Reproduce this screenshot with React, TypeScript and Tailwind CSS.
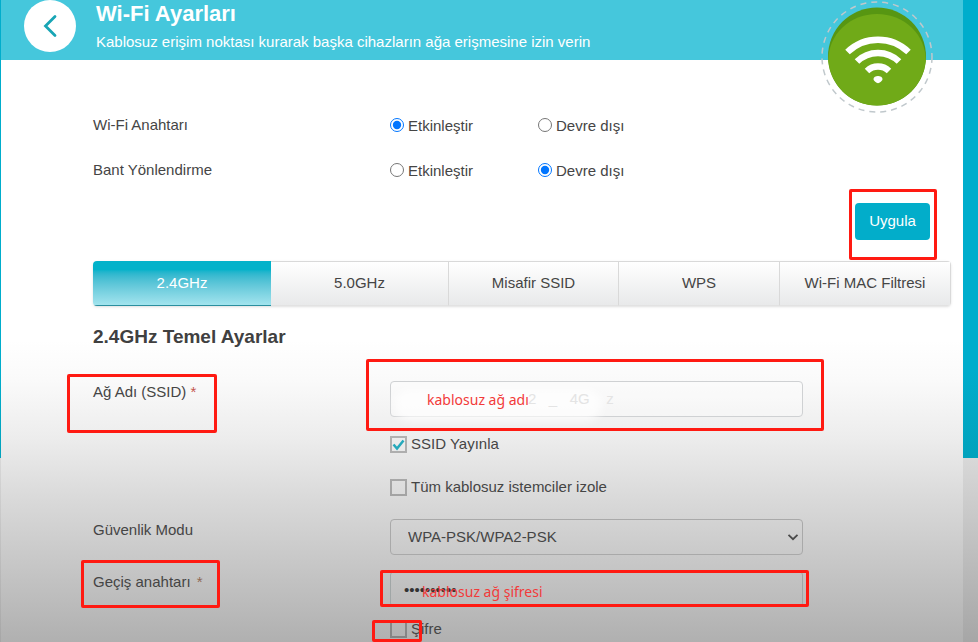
import { useState } from "react";
import type { ReactNode } from "react";

const tabs = ["2.4GHz", "5.0GHz", "Misafir SSID", "WPS", "Wi-Fi MAC Filtresi"];

function Mark({ className }: { className: string }) {
  return <span aria-hidden="true" className={`pointer-events-none absolute rounded-xs border-3 border-[#ff1a12] ${className}`} />;
}

function Note({ className, children }: { className: string; children: ReactNode }) {
  return (
    <span
      className={`pointer-events-none absolute text-[14px] leading-5 whitespace-nowrap text-[#f23a3a] font-['Noto_Sans',sans-serif] ${className}`}
    >
      {children}
    </span>
  );
}

function WifiBadge() {
  return (
    <svg viewBox="0 0 114 114" className="absolute top-0 right-[29px] size-[114px]" aria-hidden="true">
      <path d="M3 60a54 54 0 0 0 108 0z" fill="#fff" />
      <circle cx="57" cy="57" r="55" fill="none" stroke="#c0c8cc" strokeWidth="1.5" strokeDasharray="6 5" />
      <circle cx="57" cy="56.5" r="49" fill="#579612" />
      <path d="M8.2 61C8.2 34 30 14 57 14S105.800 34 105.800 61A49 49 0 0 1 8.200 61z" fill="#70aa18" />
      <g fill="none" stroke="#fff" strokeWidth="6.5">
        <path d="M27.500 52A44 44 0 0 1 88.500 52" />
        <path d="M37 61.500A30 30 0 0 1 79 61.500" />
        <path d="M47 71A16 16 0 0 1 69 71" />
      </g>
      <path d="M53.500 79c0-4 9-4 9 0 0 1.800-3 4-4.500 4.200C56.500 83 53.500 80.800 53.500 79z" fill="#fff" />
    </svg>
  );
}

function RadioRow({ name, label, initial }: { name: string; label: string; initial: "on" | "off" }) {
  const [value, setValue] = useState(initial);
  return (
    <>
      <span id={`${name}-label`} className="leading-[23px]">
        {label}
      </span>
      <div role="radiogroup" aria-labelledby={`${name}-label`} className="grid grid-cols-[148fr_265fr] leading-[26px]">
        <label className="flex items-start gap-1">
          <input type="radio" name={name} checked={value === "on"} onChange={() => setValue("on")} className="mt-[5px] size-[14px]" />
          Etkinleştir
        </label>
        <label className="flex items-start gap-1">
          <input type="radio" name={name} checked={value === "off"} onChange={() => setValue("off")} className="mt-[5px] size-[14px]" />
          Devre dışı
        </label>
      </div>
      <span />
    </>
  );
}

function CheckRow({ label, checked = false }: { label: string; checked?: boolean }) {
  return (
    <label className="flex items-center gap-1 leading-[18px]">
      <span className="relative size-[17px]">
        <input
          type="checkbox"
          defaultChecked={checked}
          className="peer block size-[17px] appearance-none border-2 border-black/25 bg-transparent"
        />
        <svg
          viewBox="0 0 17 17"
          className="pointer-events-none absolute inset-0 hidden peer-checked:block"
          fill="none"
          stroke="#25a9bb"
          strokeWidth="2.5"
        >
          <path d="M3.500 8.500l3.500 4 6.500-8" />
        </svg>
      </span>
      {label}
    </label>
  );
}

export default function App() {
  const [tab, setTab] = useState(tabs[0]);
  const row = "grid grid-cols-[297fr_413fr_148fr] items-start";

  return (
    <div className="min-h-screen bg-[linear-gradient(#00adcc_0,#00adcc_370px,#02a2bc_458px,#d8d8d8_458px,#a6a6a6_642px)] pr-[15px] pl-px font-['Liberation_Sans',Arial,sans-serif] text-[15px] text-[#454545]">
      <div className="relative min-h-screen bg-[linear-gradient(#fff_0,#fff_340px,#fafafa_380px,#ececec_440px,#d9d9d9_500px,#c5c5c5_570px,#b0b0b0_642px)]">
        <header className="flex h-[60px] items-start gap-5 bg-[#45c7dc] pl-[23px] text-white">
          <button type="button" aria-label="Geri" className="flex size-[52px] items-center justify-center rounded-full bg-white">
            <svg viewBox="0 0 52 52" className="size-[52px]" fill="none" stroke="#18a5b5" strokeWidth="2.8" strokeLinecap="round">
              <path d="M31 16.500L21.500 26L31 35.500" />
            </svg>
          </button>
          <div className="leading-7">
            <h1 className="text-[22px] font-bold">Wi-Fi Ayarları</h1>
            <p className="text-[15px]">Kablosuz erişim noktası kurarak başka cihazların ağa erişmesine izin verin</p>
          </div>
          <WifiBadge />
        </header>

        <main className="pt-[53px] pr-3 pl-[92px]">
          <div className={`${row} gap-y-[19px]`}>
            <RadioRow name="wifi" label="Wi-Fi Anahtarı" initial="on" />
            <RadioRow name="band" label="Bant Yönlendirme" initial="off" />
          </div>

          <div className="mt-[19px] flex justify-end pr-[21px]">
            <div className="relative">
              <button type="button" className="block h-[37px] w-[75px] rounded bg-[#02adca] text-white">
                Uygula
              </button>
              <Mark className="-top-[14px] -right-[7px] -bottom-5 -left-[6px]" />
            </div>
          </div>

          <nav className="mt-[21px] grid h-[45px] grid-cols-[178fr_178fr_170fr_161fr_171fr] overflow-hidden rounded shadow-sm">
            {tabs.map((t) => (
              <button
                key={t}
                type="button"
                onClick={() => setTab(t)}
                className={
                  t === tab
                    ? "border-b border-[#2b8f9f] bg-linear-to-b from-[#02b2ca] from-20% to-[#a2e4ee] text-white"
                    : "border-y border-r border-t-[#d9d9d9] border-r-[#d9d9d9] border-b-[#e2e2e2] bg-linear-to-b from-white to-[#e8e9ea]"
                }
              >
                {t}
              </button>
            ))}
          </nav>

          <h2 className="mt-[17px] text-[19px] leading-7 font-bold text-[#404040]">2.4GHz Temel Ayarlar</h2>

          <div className={`${row} mt-[30px]`}>
            <div className="relative leading-[22px]">
              <label htmlFor="ssid">
                Ağ Adı (SSID) <span className="text-[#c4554d]">*</span>
              </label>
              <Mark className="-top-[7px] -left-[26px] h-[59px] w-[150px]" />
            </div>
            <div className="relative">
              <input id="ssid" type="text" className="block h-9 w-full rounded border border-[#cfd1d3] bg-white/30 px-[14px]" />
              <span aria-hidden="true" className="pointer-events-none absolute top-2 left-1 h-8 w-52 rounded-full bg-white/70 blur-xs" />
              <span aria-hidden="true" className="pointer-events-none absolute top-2 left-[138px] leading-5 whitespace-pre text-[#e4e4e4]">
                {"2   _   4G    z"}
              </span>
              <Note className="top-[9px] left-[37px]">kablosuz ağ adı</Note>
              <Mark className="-top-[22px] -right-[21px] -bottom-[14px] -left-6" />
            </div>
          </div>

          <div className={`${row} mt-[18px]`}>
            <div className="col-start-2 flex flex-col gap-[25px]">
              <CheckRow label="SSID Yayınla" checked />
              <CheckRow label="Tüm kablosuz istemciler izole" />
            </div>
          </div>

          <div className={`${row} mt-[23px]`}>
            <label htmlFor="security" className="leading-[22px]">
              Güvenlik Modu
            </label>
            <div className="relative">
              <select id="security" className="block h-9 w-full appearance-none rounded border border-[#a9a9a9] bg-transparent px-[17px]">
                <option>WPA-PSK/WPA2-PSK</option>
              </select>
              <svg
                viewBox="0 0 12 12"
                className="pointer-events-none absolute top-3 right-1 size-3"
                fill="none"
                stroke="#4a4a4a"
                strokeWidth="1.8"
              >
                <path d="M1.500 3.800L6 8.200L10.500 3.800" />
              </svg>
            </div>
          </div>

          <div className={`${row} mt-4`}>
            <div className="relative leading-[22px]">
              <label htmlFor="passkey">
                Geçiş anahtarı <span className="ml-0.5 text-[#8f6a55]">*</span>
              </label>
              <Mark className="-top-[11px] -left-3 h-12 w-[139px]" />
            </div>
            <div className="relative">
              <input
                id="passkey"
                type="password"
                defaultValue="0123456789"
                className="block h-9 w-full rounded border border-[#a0a6a6] bg-transparent px-[13px] text-[#333]"
              />
              <Note className="top-[11px] left-8">kablosuz ağ şifresi</Note>
              <Mark className="-top-px -right-[6px] bottom-0 -left-[10px]" />
            </div>
          </div>

          <div className={`${row} mt-[13px]`}>
            <div className="relative col-start-2">
              <CheckRow label="Şifre" />
              <Mark className="top-0 -left-[18px] h-[22px] w-[50px]" />
            </div>
          </div>
        </main>
      </div>
    </div>
  );
}
